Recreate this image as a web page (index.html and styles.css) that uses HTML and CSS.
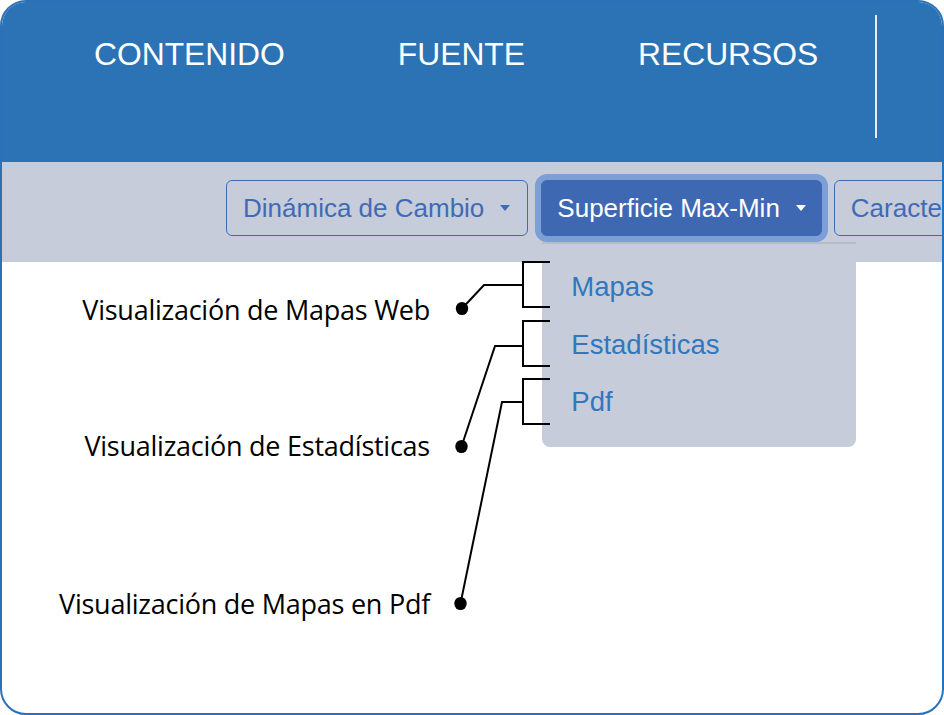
FILE: index.html
```html
<!DOCTYPE html>
<html lang="es">
<head>
<meta charset="utf-8">
<title>Superficie Max-Min</title>
<link rel="stylesheet" href="styles.css">
</head>
<body>
<div class="frame">
  <header class="topbar">
    <nav class="nav">
      <span class="nav-item">CONTENIDO</span>
      <span class="nav-item">FUENTE</span>
      <span class="nav-item">RECURSOS</span>
    </nav>
    <span class="nav-sep"></span>
  </header>
  <div class="toolbar">
    <div class="btn">Dinámica de Cambio<span class="caret"></span></div>
    <div class="dropdown">
      <div class="btn btn-active">Superficie Max-Min<span class="caret"></span></div>
      <ul class="menu">
        <li class="menu-item">Mapas</li>
        <li class="menu-item">Estadísticas</li>
        <li class="menu-item">Pdf</li>
      </ul>
    </div>
    <div class="btn btn-next">Características<span class="caret"></span></div>
  </div>
  <main class="content">
    <p class="label label-web">Visualización de Mapas Web</p>
    <p class="label label-stats">Visualización de Estadísticas</p>
    <p class="label label-pdf">Visualización de Mapas en Pdf</p>
  </main>
  <svg class="callouts" width="944" height="715" viewBox="0 0 944 715" aria-hidden="true">
    <g fill="none" stroke="#000" stroke-width="2" stroke-linejoin="miter">
      <path d="M462 308.5 L484 285 H523"/>
      <path d="M550 262 H523 V307 H550"/>
      <path d="M461.5 446.5 L495 346 H523"/>
      <path d="M550 321 H523 V366 H550"/>
      <path d="M460.5 603.5 L502 402 H523"/>
      <path d="M550 379 H523 V424 H550"/>
    </g>
    <g fill="#000">
      <ellipse cx="462" cy="308.5" rx="6.2" ry="6.6"/>
      <ellipse cx="461.5" cy="446.5" rx="6.2" ry="6.6"/>
      <ellipse cx="460.5" cy="603.5" rx="6.2" ry="6.6"/>
    </g>
  </svg>
</div>
</body>
</html>
```
FILE: styles.css
```css
* { box-sizing: border-box; }
html, body { margin: 0; padding: 0; background: #fff; }

.frame {
  position: relative;
  width: 944px;
  height: 715px;
  border: 2px solid #2a72b8;
  border-radius: 26px;
  overflow: hidden;
  background: #fff;
  font-family: "Liberation Sans", Arial, sans-serif;
}

/* header */
.topbar {
  height: 160px;
  background: #2b73b5;
  display: flex;
  align-items: flex-start;
  padding-left: 92px;
}
.nav {
  display: flex;
  gap: 113px;
  padding-top: 34px;
}
.nav-item {
  color: #fff;
  font-size: 31.8px;
  line-height: 36px;
  white-space: nowrap;
}
.nav-sep {
  width: 2px;
  height: 123px;
  margin-top: 13px;
  margin-left: 57px;
  background: #e6edf7;
}

/* toolbar */
.toolbar {
  height: 100px;
  background: #c7ccdb;
  display: flex;
  align-items: flex-start;
  gap: 13px;
  padding: 18px 0 0 224px;
}
.btn {
  flex-shrink: 0;
  height: 56px;
  display: flex;
  align-items: center;
  padding: 0 17px 0 16px;
  border: 1.5px solid #3f6bb5;
  border-radius: 6px;
  color: #3f6bb5;
  font-size: 26px;
  white-space: nowrap;
}
.caret {
  width: 0;
  height: 0;
  border-left: 5.5px solid transparent;
  border-right: 5.5px solid transparent;
  border-top: 6.5px solid currentColor;
  margin-left: 16px;
}
.btn-active {
  padding: 0 15px;
  background: #3e68b2;
  border-color: #3e68b2;
  color: #fff;
  box-shadow: 0 0 0 6px #7c9fd6;
}
.btn-next { margin-left: -1px; }

.dropdown {
  position: relative;
  flex-shrink: 0;
}
.menu {
  position: absolute;
  top: 62px;
  left: 1px;
  width: 314px;
  margin: 0;
  padding: 14px 0 16px 29px;
  list-style: none;
  background: #c7ccdb;
  border-top: 2px solid #b6bbc8;
  border-radius: 0 0 8px 8px;
  z-index: 2;
}
.menu-item {
  font-size: 27.5px;
  line-height: 57.5px;
  color: #2f78c0;
}

/* annotation labels */
.content {
  width: 428px;
  display: flex;
  flex-direction: column;
  align-items: flex-end;
  padding-top: 28px;
}
.label {
  margin: 0;
  font-family: "Open Sans", "Noto Sans", sans-serif;
  font-size: 27px;
  letter-spacing: -0.25px;
  line-height: 40px;
  color: #000;
  white-space: nowrap;
}
.label-stats { margin-top: 96px; }
.label-pdf { margin-top: 118px; }

.callouts {
  position: absolute;
  left: -2px;
  top: -2px;
  z-index: 3;
  pointer-events: none;
}
```
